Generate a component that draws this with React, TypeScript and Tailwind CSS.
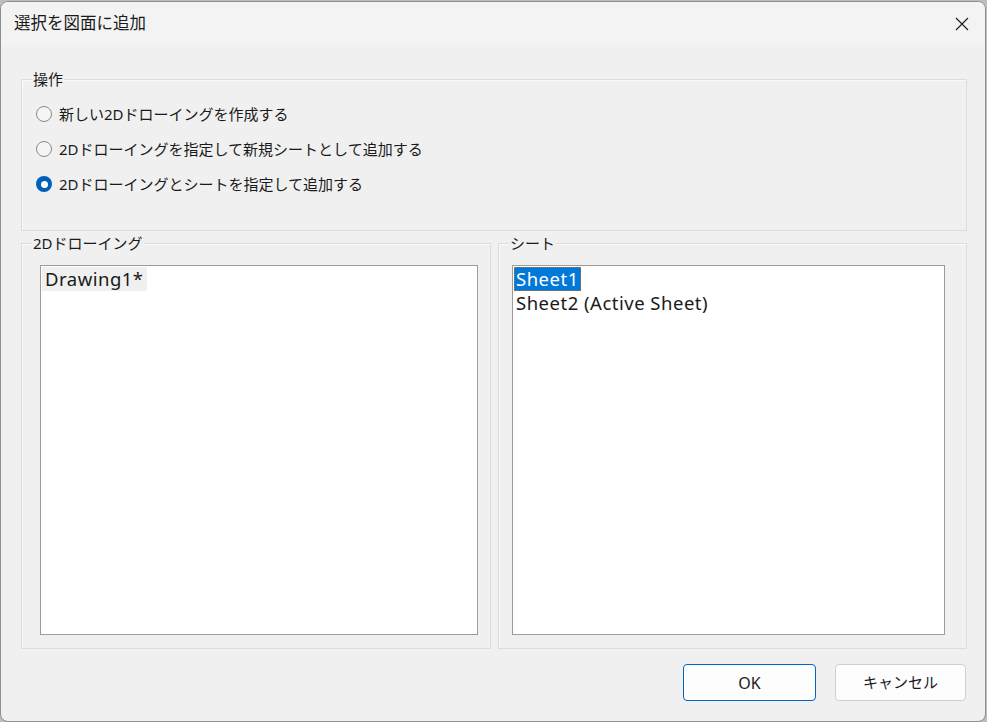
import React from "react";

const font = { fontFamily: '"Segoe UI", "Noto Sans", "Noto Sans CJK JP", sans-serif' };

function Radio({ checked, label }: { checked?: boolean; label: string }) {
  return (
    <div className="flex items-center h-[24px]">
      {checked ? (
        <span className="w-[16px] h-[16px] rounded-full bg-[#005fb8] flex items-center justify-center">
          <span className="w-[7px] h-[7px] rounded-full bg-white" />
        </span>
      ) : (
        <span className="w-[16px] h-[16px] rounded-full border border-[#8a8a8a] bg-[#f5f5f5]" />
      )}
      <span className="ml-[7px] text-[15px] text-[#1a1a1a] leading-none">{label}</span>
    </div>
  );
}

function Group({ label, className, children }: { label: string; className?: string; children?: React.ReactNode }) {
  return (
    <div className={"relative border border-[#dcdcdc] shadow-[inset_1px_1px_0_#fafafa] " + (className ?? "")}>
      <span className="absolute left-[10px] top-[-12px] bg-[#f0f0f0] px-[1px] text-[15px] leading-[22px] text-[#1a1a1a]">
        {label}
      </span>
      {children}
    </div>
  );
}

export default function App() {
  return (
    <div className="w-[987px] h-[722px] bg-[#bdbdbd] overflow-hidden" style={font}>
      <div className="w-[986px] h-[721px] mt-[1px] bg-[#f0f0f0] border border-[#8e8e8e] rounded-[8px] overflow-hidden flex flex-col">
        {/* title bar */}
        <div className="h-[43px] bg-[#f3f3f3] flex items-center justify-between shrink-0">
          <span className="ml-[13px] text-[16.5px] text-[#1a1a1a] leading-none">選択を図面に追加</span>
          <div className="w-[46px] h-[43px] flex items-center justify-center">
            <svg width="14" height="14" viewBox="0 0 14 14">
              <path d="M1 1 L13 13 M13 1 L1 13" stroke="#1a1a1a" strokeWidth="1.1" fill="none" />
            </svg>
          </div>
        </div>
        {/* body */}
        <div className="flex-1 flex flex-col pl-[20px] pr-[18px] pt-[34px]">
          <Group label="操作" className="h-[152px] pl-[14px] pt-[22px]">
            <div className="flex flex-col gap-[11px]">
              <Radio label="新しい2Dドローイングを作成する" />
              <Radio label="2Dドローイングを指定して新規シートとして追加する" />
              <Radio checked label="2Dドローイングとシートを指定して追加する" />
            </div>
          </Group>
          <div className="flex gap-[7px] mt-[12px] h-[406px]">
            <Group label="2Dドローイング" className="w-[470px] pl-[18px] pr-[12px] pt-[21px] pb-[13px] flex">
              <div className="flex-1 bg-white border border-[#9c9c9c] pt-[1px] pl-[1px]">
                <div className="inline-block bg-[#f0f0f0] h-[24px] px-[3px] text-[18.5px] tracking-[0.5px] leading-[23px] text-[#1a1a1a]">
                  Drawing1*
                </div>
              </div>
            </Group>
            <Group label="シート" className="flex-1 pl-[13px] pr-[21px] pt-[21px] pb-[13px] flex">
              <div className="flex-1 bg-white border border-[#9c9c9c] pt-[1px] pl-[1px] flex flex-col items-start">
                <div className="bg-[#0078d7] h-[24px] px-[2px] text-[18.5px] tracking-[0.5px] leading-[23px] text-white outline-1 outline-dotted outline-[#c07020] -outline-offset-1">
                  Sheet1
                </div>
                <div className="h-[24px] px-[2px] text-[18.5px] tracking-[0.5px] leading-[23px] text-[#1a1a1a]">
                  Sheet2 (Active Sheet)
                </div>
              </div>
            </Group>
          </div>
          <div className="flex justify-end gap-[19px] mt-[15px] pr-[1px]">
            <button className="w-[133px] h-[37px] bg-[#fdfdfd] border border-[#0067c0] rounded-[4px] text-[16px] text-[#1a1a1a]">
              OK
            </button>
            <button className="w-[131px] h-[37px] bg-[#fdfdfd] border border-[#d0d0d0] rounded-[4px] text-[15px] text-[#1a1a1a]">
              キャンセル
            </button>
          </div>
        </div>
      </div>
    </div>
  );
}
